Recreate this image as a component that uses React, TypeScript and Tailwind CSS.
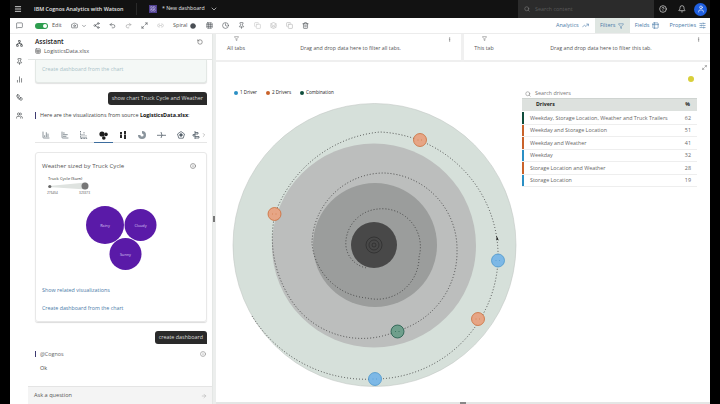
import React from 'react';
import {
  Menu, MessageSquare, Share2, Undo2, Redo2, Maximize2, Link2, Pin, Copy, Layers, Trash2, ChevronDown, Search,
  CircleHelp, Bell, User, TrendingUp, Filter, Table2, SlidersHorizontal, RotateCcw, Network, BarChart2, Workflow, Users,
  Info, ChevronRight, ArrowRight, MoreVertical, LayoutGrid, Camera, Clock, Circle, BarChart3, BarChartHorizontal, Grid3x3, Sheet,
} from 'lucide-react';

const font = 'font-["Open_Sans","Noto_Sans",sans-serif]';

const DRIVERS = [
  { name: 'Weekday, Storage Location, Weather and Truck Trailers', pct: 62, bar: 'bg-[#0f4d3c]' },
  { name: 'Weekday and Storage Location', pct: 51, bar: 'bg-[#c9622a]' },
  { name: 'Weekday and Weather', pct: 41, bar: 'bg-[#c9622a]' },
  { name: 'Weekday', pct: 32, bar: 'bg-[#2b8fc4]' },
  { name: 'Storage Location and Weather', pct: 28, bar: 'bg-[#c9622a]' },
  { name: 'Storage Location', pct: 19, bar: 'bg-[#2b8fc4]' },
];

const NODES = [
  { x: 420, y: 140, r: 6.5, fill: '#e6a585', stroke: '#c9622a' },
  { x: 274.5, y: 214, r: 6.5, fill: '#e6a585', stroke: '#c9622a' },
  { x: 498, y: 260.5, r: 6.5, fill: '#7db8e6', stroke: '#3f8fc9' },
  { x: 478, y: 319, r: 6.5, fill: '#e6a585', stroke: '#c9622a' },
  { x: 397.5, y: 331.5, r: 6.5, fill: '#6f9f8c', stroke: '#0f4d3c' },
  { x: 375, y: 379, r: 6.5, fill: '#7db8e6', stroke: '#3f8fc9' },
];

// the dotted line is one long spiral from the outer ring into the dark centre
const SPIRAL =
  'M252 316 A135 135 0 0 0 375 379 A124 124 0 0 0 498 260 A124 124 0 0 0 380 132 A124 124 0 0 0 275 214 ' +
  'A110 110 0 0 0 287 293 A85 85 0 0 0 397 331 A82 82 0 0 0 457 250 A76 76 0 0 0 384 173 A72 72 0 0 0 312 243 ' +
  'A60 60 0 0 0 367 298 A42 42 0 0 0 419 257 A38 38 0 0 0 378 209 A35 35 0 0 0 346 240 A25 25 0 0 0 367 268';

function Chart() {
  // svg coords are page coords, the viewBox just shifts them into the canvas
  return (
    <svg width="300" height="300" viewBox="224 98 300 300" className="shrink-0">
      <circle cx="374.5" cy="245" r="141.5" fill="#d6e0da" stroke="#c2c8c4" strokeWidth="0.6" />
      <circle cx="374" cy="245.5" r="102" fill="#bcbebd" />
      <circle cx="375" cy="245" r="62" fill="#9b9d9c" />
      <circle cx="374" cy="245" r="23" fill="#484848" />
      <circle cx="374" cy="245" r="8" fill="none" stroke="#2b2b2b" strokeWidth="0.7" />
      <circle cx="374" cy="245" r="5" fill="none" stroke="#2b2b2b" strokeWidth="0.7" />
      <circle cx="374" cy="245" r="2" fill="none" stroke="#2b2b2b" strokeWidth="0.7" />
      <path d={SPIRAL} fill="none" stroke="#333" strokeWidth="0.9" strokeDasharray="0.9 2.1" />
      {NODES.map((n, i) => (
        <g key={i}>
          <circle cx={n.x} cy={n.y} r={n.r} fill={n.fill} stroke={n.stroke} strokeWidth="0.7" />
          <path d={`M${n.x - 2.5} ${n.y}h1M${n.x + 1} ${n.y}h1`} stroke={n.stroke} strokeWidth="0.5" />
        </g>
      ))}
      <path d="M496.5 235.5 L496.5 240.5 L497.8 239.4 L499 241 Z" fill="#111" />
    </svg>
  );
}

function ToolIcon({ children, className = '' }: { children: React.ReactNode; className?: string }) {
  return <span className={`flex w-[16px] justify-center text-[#4a4f55] ${className}`}>{children}</span>;
}

function TopBar() {
  return (
    <div className="flex h-[18px] items-center bg-[#121212] text-[#e4e4e4]">
      <Menu size={8} className="ml-[4px] text-[#cfcfcf]" strokeWidth={3} />
      <span className="ml-[12px] w-[89px] whitespace-nowrap text-[5.4px] font-semibold">IBM Cognos Analytics with Watson</span>
      <span className="ml-[13px] h-[12px] w-px bg-[#2a2a2a]" />
      <span className="ml-[12px] flex h-[8px] w-[8px] items-center justify-center bg-[#4f3f8f]">
        <LayoutGrid size={6} className="text-[#c8c0ea]" />
      </span>
      <span className="ml-[5px] w-[44px] whitespace-nowrap text-[5.2px]">* New dashboard</span>
      <ChevronDown size={8} className="ml-[4px]" />
      <div className="ml-[300px] flex h-full w-[136px] items-center bg-[#2b2b2b] pl-[6px]">
        <Search size={6} className="text-[#8a8a8a]" />
        <span className="ml-[5px] text-[5.4px] text-[#5a5a5a]">Search content</span>
      </div>
      <CircleHelp size={8} className="ml-[5px]" />
      <Bell size={8} className="ml-[11px]" />
      <span className="ml-[8px] flex h-[13px] w-[13px] items-center justify-center rounded-full bg-[#1f5fe0]">
        <User size={8} className="text-white" />
      </span>
    </div>
  );
}

function ToolBar() {
  return (
    <div className="flex h-[16px] items-center border-b border-[#ececec] bg-white text-[5.5px] text-[#555]">
      <ToolIcon className="ml-[1px]"><MessageSquare size={7} /></ToolIcon>
      <span className="ml-[8px] flex h-[6px] w-[13px] items-center justify-end rounded-full bg-[#2e9e4f] pr-[1px]">
        <span className="h-[4px] w-[4px] rounded-full bg-white" />
      </span>
      <span className="ml-[4px] w-[10px]">Edit</span>
      <ToolIcon className="ml-[4px]"><Camera size={7} /></ToolIcon>
      <ChevronDown size={6} className="-ml-[1px] text-[#4a4f55]" />
      <ToolIcon className="ml-[1px]"><Share2 size={7} /></ToolIcon>
      <ToolIcon><Undo2 size={7} /></ToolIcon>
      <ToolIcon><Redo2 size={7} className="text-[#9a9a9a]" /></ToolIcon>
      <ToolIcon><Maximize2 size={7} /></ToolIcon>
      <ToolIcon><Link2 size={7} className="text-[#bcbcbc]" /></ToolIcon>
      <span className="ml-[5px] w-[15px]">Spiral</span>
      <ToolIcon className="-ml-[3px]"><Circle size={6} fill="#4a4f55" /></ToolIcon>
      <ToolIcon><Grid3x3 size={7} /></ToolIcon>
      <ToolIcon><Clock size={7} /></ToolIcon>
      <ToolIcon><Pin size={7} /></ToolIcon>
      <ToolIcon><Copy size={7} className="text-[#c4c4c4]" /></ToolIcon>
      <ToolIcon><Layers size={7} className="text-[#b0b0b0]" /></ToolIcon>
      <ToolIcon><Copy size={7} className="text-[#b0b0b0]" /></ToolIcon>
      <ToolIcon><Trash2 size={7} /></ToolIcon>
      <div className="ml-auto flex h-full items-center text-[#4a7aa8]">
        <span>Analytics</span>
        <TrendingUp size={7} className="ml-[3px] mr-[6px]" />
        <span className="flex h-full w-[35px] items-center justify-center gap-[3px] bg-[#dfe6e2]">
          Filters <Filter size={6} />
        </span>
        <span className="ml-[5px]">Fields</span>
        <Table2 size={7} className="ml-[3px]" />
        <span className="ml-[10px]">Properties</span>
        <SlidersHorizontal size={7} className="ml-[3px] mr-[4px]" />
      </div>
    </div>
  );
}

function SideRail() {
  return (
    <div className="flex w-[18px] shrink-0 flex-col items-center gap-[11px] bg-white pt-[6px] text-[#33383d]">
      <Network size={7} />
      <Pin size={7} />
      <BarChart2 size={7} />
      <Workflow size={7} />
      <Users size={7} />
    </div>
  );
}

function Bubble({ children }: { children: React.ReactNode }) {
  return (
    <div className="flex justify-end pr-[5px]">
      <div className="rounded-[3px] rounded-br-none bg-[#2a2a2a] px-[4px] py-[3px] text-[5.4px] leading-[7px] whitespace-nowrap text-[#dcdcdc]">
        {children}
      </div>
    </div>
  );
}

function Bubbles() {
  return (
    <svg width="172" height="66" viewBox="35 205 172 66" className="mt-[9px] block">
      <circle cx="104" cy="225" r="19" fill="#5a1aa8" />
      <circle cx="139.5" cy="225" r="16" fill="#5a1aa8" />
      <circle cx="124.5" cy="254" r="16" fill="#5a1aa8" />
      <text x="104" y="226.5" textAnchor="middle" fontSize="3.8" fill="#d9c6f2">Rainy</text>
      <text x="139.5" y="226.5" textAnchor="middle" fontSize="3.8" fill="#d9c6f2">Cloudy</text>
      <text x="124.5" y="255.5" textAnchor="middle" fontSize="3.8" fill="#d9c6f2">Sunny</text>
    </svg>
  );
}

// chart type tabs of the assistant, lucide has no match for most of these
const CHART_TABS: React.ReactNode[] = [
  <BarChart3 size={8} />,
  <BarChartHorizontal size={8} />,
  <svg width="8" height="8" viewBox="0 0 8 8" fill="none" stroke="currentColor" strokeWidth="0.8"><path d="M.5 0v7.5h7M2 7V3M4 7V1M6 7V4" strokeDasharray="1 .6" /></svg>,
  <svg width="9" height="9" viewBox="0 0 9 9" fill="#1b1b1b"><circle cx="3" cy="3" r="2.6" /><circle cx="7" cy="3.4" r="1.8" /><circle cx="4.8" cy="7" r="1.8" /></svg>,
  <svg width="8" height="8" viewBox="0 0 8 8" fill="#2a2a2a"><path d="M1 1h2v2H1zM1 3.6h2V7H1zM5 0h2v3H5zM5 3.6h2V8H5z" /></svg>,
  <svg width="8" height="8" viewBox="0 0 8 8" fill="#8a949c"><path d="M4 0a4 4 0 1 1-4 4h2.4A1.6 1.6 0 1 0 4 2.4z" /></svg>,
  <svg width="9" height="8" viewBox="0 0 9 8" fill="none" stroke="currentColor" strokeWidth="0.8"><path d="M0 4.3h9M4 1l1 3.3L4 7" /></svg>,
  <svg width="8" height="8" viewBox="0 0 8 8" fill="none" stroke="currentColor" strokeWidth="0.8"><path d="M4 .5 7.5 3 6.2 7.2H1.8L.5 3z" /><circle cx="4" cy="4" r="1.3" fill="currentColor" /></svg>,
  <svg width="8" height="8" viewBox="0 0 8 8" fill="none" stroke="currentColor" strokeWidth="0.8"><path d="M3 0v8M3 1.5h3v1.5H3M3 3.5H1v1.5h2M3 5.5h4V7H3" /></svg>,
];

function Assistant() {
  return (
    <div className="flex h-full w-[185px] shrink-0 flex-col overflow-hidden border-r border-[#e4e7e5] bg-white">
      <div className="h-[26px] shrink-0 border-b border-[#e2e5e3] pl-[7px]">
        <div className="flex items-center pt-[3px]">
          <span className="text-[6.5px] leading-[9px] font-semibold text-[#222]">Assistant</span>
          <RotateCcw size={6} className="ml-auto mr-[9px] text-[#444]" />
        </div>
        <div className="mt-[1px] flex items-center gap-[3px] text-[5.5px] leading-[8px] text-[#555]">
          <Sheet size={6} /> LogisticsData.xlsx
        </div>
      </div>

      <div className="ml-[7px] h-[23px] w-[172px] shrink-0 rounded-b-[3px] border border-t-0 border-[#e3e8e5] bg-[#f4f8f6] pl-[6px] pt-[5px] text-[5.3px] leading-[8px] text-[#a9c2c8] shadow-[0_1px_1px_rgba(0,0,0,0.12)]">
        Create dashboard from the chart
      </div>

      <div className="mt-[9px]"><Bubble>show chart Truck Cycle and Weather</Bubble></div>

      <div className="ml-[7px] mt-[7px] flex h-[7px] items-center border-l border-[#3d3a70] pl-[4px] text-[5.4px] whitespace-nowrap text-[#444]">
        Here are the visualizations from source&nbsp;<b className="text-[#111]">LogisticsData.xlsx</b>:
      </div>

      <div className="ml-[7px] mt-[11px] flex h-[13px] w-[172px] shrink-0 items-start border-b border-[#e6e6e6] pl-[1px] text-[#54606a]">
        {CHART_TABS.map((icon, i) => (
          <span
            key={i}
            className={`flex h-[13px] justify-center pt-[1px] ${i === 8 ? 'w-[11px]' : 'w-[19.5px]'} ${i === 3 ? 'border-b border-[#3d6d9e]' : ''}`}
          >
            {icon}
          </span>
        ))}
        <ChevronRight size={6} className="mt-[2px] text-[#888]" />
      </div>

      <div className="ml-[7px] mt-[9px] h-[170px] w-[172px] shrink-0 rounded-[3px] border border-[#e8e8e8] px-[6px] shadow-[0_1px_1px_rgba(0,0,0,0.14)]">
        <div className="flex items-center pt-[8px] text-[6.1px] leading-[9px] text-[#555]">
          Weather sized by Truck Cycle
          <Info size={6} className="ml-auto mr-[4px] text-[#555]" />
        </div>
        <div className="ml-[6px] mt-[6px] text-[4.2px] leading-[6px] text-[#333]">Truck Cycle (Sum)</div>
        <div className="ml-[6px] flex h-[8px] w-[41px] items-center">
          <svg width="41" height="8" viewBox="0 0 41 8">
            <path d="M1 4 L38 0.5 L38 7.5 L1 5 Z" fill="#dfe3e0" />
            <circle cx="1.8" cy="4.5" r="1.6" fill="#666" />
            <circle cx="37" cy="4" r="3.5" fill="#777" />
          </svg>
        </div>
        <div className="ml-[5px] mt-[1px] flex w-[43px] justify-between text-[3.2px] leading-[5px] text-[#555]">
          <span>276454</span><span>323373</span>
        </div>
        <div className="-mx-[6px]"><Bubbles /></div>
        <div className="mt-[15px] text-[5.4px] leading-[8px] text-[#4a7aa8]">Show related visualizations</div>
        <div className="mt-[10px] text-[5.3px] leading-[8px] text-[#4a7aa8]">Create dashboard from the chart</div>
      </div>

      <div className="mt-[9px]"><Bubble>create dashboard</Bubble></div>

      <div className="ml-[7px] mt-[7px] flex h-[6px] items-center border-l border-[#3d3a70] pl-[4px] text-[5.4px] text-[#666]">
        @Cognos
        <Info size={6} className="ml-auto mr-[6px] text-[#777]" />
      </div>
      <div className="ml-[12px] mt-[7px] text-[5.4px] leading-[8px] text-[#444]">Ok</div>

      <div className="mt-auto flex h-[18px] shrink-0 items-center border-t border-[#e4e4e4] bg-[#f4f4f4] pl-[6px] pr-[5px] text-[5.6px] text-[#555]">
        Ask a question
        <ArrowRight size={6} className="ml-auto text-[#aaa]" />
      </div>
    </div>
  );
}

function FilterCell({ label, hint, hintPad, className = '' }: { label: string; hint: string; hintPad: string; className?: string }) {
  return (
    <div className={`flex h-[28px] items-start pl-[10px] pr-[9px] text-[5.3px] text-[#555] ${className}`}>
      <div className="flex w-[20px] flex-col items-center pt-[2px]">
        <Filter size={5} />
        <span className="mt-[3px] whitespace-nowrap leading-[8px]">{label}</span>
      </div>
      <span className={`flex-1 pt-[10px] text-center leading-[8px] whitespace-nowrap ${hintPad}`}>{hint}</span>
      <MoreVertical size={5} className="mt-[3px]" />
    </div>
  );
}

function LegendItem({ dot, label }: { dot: string; label: string }) {
  return (
    <span className="flex items-center gap-[2px] text-[4.6px] text-[#222]">
      <span className={`h-[4px] w-[4px] rounded-full ${dot}`} />
      {label}
    </span>
  );
}

function Canvas() {
  return (
    <div className="relative flex min-w-0 flex-1 flex-col bg-white">
      <div className="flex h-[28px] shrink-0 border-b-[2px] border-[#efefef]">
        <FilterCell label="All tabs" hint="Drag and drop data here to filter all tabs." hintPad="pl-[8px]" className="w-[248px] border-r-[3px] border-[#f0f0f0]" />
        <FilterCell label="This tab" hint="Drag and drop data here to filter this tab." hintPad="pl-[12px]" className="flex-1" />
      </div>
      <Maximize2 size={5} className="absolute right-[3px] top-[31px] text-[#555]" />
      <div className="flex min-h-0 flex-1 overflow-hidden">
        <div className="w-[306px] shrink-0 overflow-hidden pl-[8px]">
          <div className="mb-[2px] flex h-[34px] items-end gap-[9px] pl-[10px]">
            <LegendItem dot="bg-[#2b8fc4]" label="1 Driver" />
            <LegendItem dot="bg-[#c9622a]" label="2 Drivers" />
            <LegendItem dot="bg-[#0f4d3c]" label="Combination" />
          </div>
          <Chart />
        </div>
        <div className="flex flex-1 flex-col pr-[13px]">
          <div className="flex h-[20px] items-end justify-end pr-[3px]">
            <span className="h-[6px] w-[6px] rounded-full bg-[#d8cf3a]" />
          </div>
          <div className="mt-[7px] flex h-[9px] items-center gap-[4px] pl-[3px] text-[5.4px] text-[#777]">
            <Search size={6} /> Search drivers
          </div>
          <div className="flex h-[13px] items-center border-t border-[#cfd4d1] bg-[#dde1de] pl-[14px] pr-[7px] text-[5.2px] font-bold text-[#222]">
            Drivers <span className="ml-auto">%</span>
          </div>
          <div className="h-px" />
          {DRIVERS.map((d) => (
            <div key={d.name} className="flex h-[12.5px] items-center border-b border-[#eeeeee] text-[5.37px] text-[#666]">
              <span className={`h-full w-[2px] ${d.bar}`} />
              <span className="ml-[6px] whitespace-nowrap">{d.name}</span>
              <span className="ml-auto pr-[6px]">{d.pct}</span>
            </div>
          ))}
        </div>
      </div>
      <div className="flex h-[2px] shrink-0 justify-center bg-[#e4e6e5]">
        <span className="h-[2px] w-[6px] bg-[#888]" />
      </div>
    </div>
  );
}

export default function App() {
  return (
    <div className={`flex h-[404px] w-[720px] overflow-hidden bg-black px-[10px] ${font}`}>
      <div className="flex min-w-0 flex-1 flex-col">
        <TopBar />
        <ToolBar />
        <div className="flex min-h-0 flex-1">
          <SideRail />
          <Assistant />
          <div className="flex w-[3px] shrink-0 items-center bg-[#eceeed]">
            <span className="h-[6px] w-[2px] bg-[#777]" />
          </div>
          <Canvas />
        </div>
      </div>
    </div>
  );
}
